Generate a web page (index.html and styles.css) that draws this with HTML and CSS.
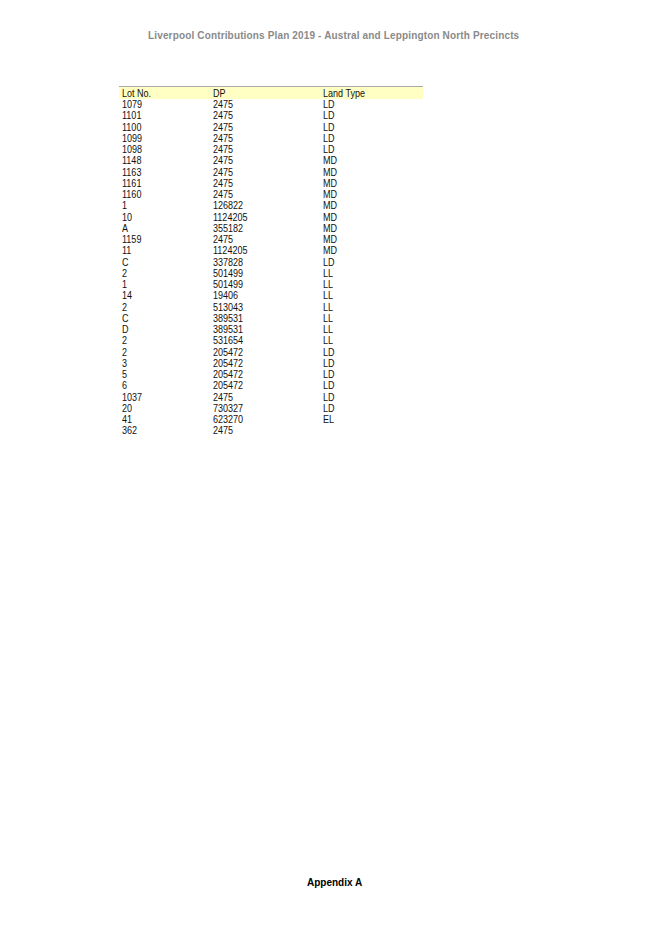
FILE: index.html
```html
<!DOCTYPE html>
<html>
<head>
<meta charset="utf-8">
<link rel="stylesheet" href="styles.css">
</head>
<body>
<div class="page">
  <div class="title">Liverpool Contributions Plan 2019 - Austral and Leppington North Precincts</div>
  <div class="table">
    <div class="row head"><span class="c1"><i>Lot No.</i></span><span class="c2"><i>DP</i></span><span class="c3"><i>Land Type</i></span></div>
    <div class="row"><span class="c1"><i>1079</i></span><span class="c2"><i>2475</i></span><span class="c3"><i>LD</i></span></div>
    <div class="row"><span class="c1"><i>1101</i></span><span class="c2"><i>2475</i></span><span class="c3"><i>LD</i></span></div>
    <div class="row"><span class="c1"><i>1100</i></span><span class="c2"><i>2475</i></span><span class="c3"><i>LD</i></span></div>
    <div class="row"><span class="c1"><i>1099</i></span><span class="c2"><i>2475</i></span><span class="c3"><i>LD</i></span></div>
    <div class="row"><span class="c1"><i>1098</i></span><span class="c2"><i>2475</i></span><span class="c3"><i>LD</i></span></div>
    <div class="row"><span class="c1"><i>1148</i></span><span class="c2"><i>2475</i></span><span class="c3"><i>MD</i></span></div>
    <div class="row"><span class="c1"><i>1163</i></span><span class="c2"><i>2475</i></span><span class="c3"><i>MD</i></span></div>
    <div class="row"><span class="c1"><i>1161</i></span><span class="c2"><i>2475</i></span><span class="c3"><i>MD</i></span></div>
    <div class="row"><span class="c1"><i>1160</i></span><span class="c2"><i>2475</i></span><span class="c3"><i>MD</i></span></div>
    <div class="row"><span class="c1"><i>1</i></span><span class="c2"><i>126822</i></span><span class="c3"><i>MD</i></span></div>
    <div class="row"><span class="c1"><i>10</i></span><span class="c2"><i>1124205</i></span><span class="c3"><i>MD</i></span></div>
    <div class="row"><span class="c1"><i>A</i></span><span class="c2"><i>355182</i></span><span class="c3"><i>MD</i></span></div>
    <div class="row"><span class="c1"><i>1159</i></span><span class="c2"><i>2475</i></span><span class="c3"><i>MD</i></span></div>
    <div class="row"><span class="c1"><i>11</i></span><span class="c2"><i>1124205</i></span><span class="c3"><i>MD</i></span></div>
    <div class="row"><span class="c1"><i>C</i></span><span class="c2"><i>337828</i></span><span class="c3"><i>LD</i></span></div>
    <div class="row"><span class="c1"><i>2</i></span><span class="c2"><i>501499</i></span><span class="c3"><i>LL</i></span></div>
    <div class="row"><span class="c1"><i>1</i></span><span class="c2"><i>501499</i></span><span class="c3"><i>LL</i></span></div>
    <div class="row"><span class="c1"><i>14</i></span><span class="c2"><i>19406</i></span><span class="c3"><i>LL</i></span></div>
    <div class="row"><span class="c1"><i>2</i></span><span class="c2"><i>513043</i></span><span class="c3"><i>LL</i></span></div>
    <div class="row"><span class="c1"><i>C</i></span><span class="c2"><i>389531</i></span><span class="c3"><i>LL</i></span></div>
    <div class="row"><span class="c1"><i>D</i></span><span class="c2"><i>389531</i></span><span class="c3"><i>LL</i></span></div>
    <div class="row"><span class="c1"><i>2</i></span><span class="c2"><i>531654</i></span><span class="c3"><i>LL</i></span></div>
    <div class="row"><span class="c1"><i>2</i></span><span class="c2"><i>205472</i></span><span class="c3"><i>LD</i></span></div>
    <div class="row"><span class="c1"><i>3</i></span><span class="c2"><i>205472</i></span><span class="c3"><i>LD</i></span></div>
    <div class="row"><span class="c1"><i>5</i></span><span class="c2"><i>205472</i></span><span class="c3"><i>LD</i></span></div>
    <div class="row"><span class="c1"><i>6</i></span><span class="c2"><i>205472</i></span><span class="c3"><i>LD</i></span></div>
    <div class="row"><span class="c1"><i>1037</i></span><span class="c2"><i>2475</i></span><span class="c3"><i>LD</i></span></div>
    <div class="row"><span class="c1"><i>20</i></span><span class="c2"><i>730327</i></span><span class="c3"><i>LD</i></span></div>
    <div class="row"><span class="c1"><i>41</i></span><span class="c2"><i>623270</i></span><span class="c3"><i>EL</i></span></div>
    <div class="row"><span class="c1"><i>362</i></span><span class="c2"><i>2475</i></span><span class="c3"><i></i></span></div>
  </div>
  <div class="spacer"></div>
  <div class="footer">Appendix A</div>
</div>
</body>
</html>
```

FILE: styles.css
```css
html, body {
  margin: 0;
  padding: 0;
  background: #ffffff;
}
.page {
  width: 653px;
  height: 930px;
  display: flex;
  flex-direction: column;
  font-family: "Liberation Sans", Arial, sans-serif;
}
.title {
  flex: none;
  margin-top: 30px;
  padding-left: 148px;
  font-size: 10px;
  font-weight: bold;
  color: #8a8a8a;
  letter-spacing: 0.15px;
  line-height: 12px;
  white-space: nowrap;
}
.table {
  flex: none;
  margin-top: 44px;
  margin-left: 119px;
  width: 304px;
  display: grid;
  grid-template-rows: 13px;
  grid-auto-rows: 11.25px;
}
.row {
  display: grid;
  grid-template-columns: 91px 110px 1fr;
  font-size: 11px;
  line-height: 11.25px;
  color: #111111;
  overflow: hidden;
}
.row span {
  padding-left: 3px;
  white-space: nowrap;
}
.row i {
  font-style: normal;
  display: inline-block;
  vertical-align: top;
  transform: scaleX(0.82);
  transform-origin: left center;
}
.row.head {
  line-height: 12px;
  background: #ffffc4;
  border-top: 1px solid #a8a8a8;
}
.spacer {
  flex: 1;
}
.footer {
  flex: none;
  margin-bottom: 41px;
  padding-left: 307px;
  font-size: 10px;
  font-weight: bold;
  color: #000000;
  line-height: 12px;
}
```
